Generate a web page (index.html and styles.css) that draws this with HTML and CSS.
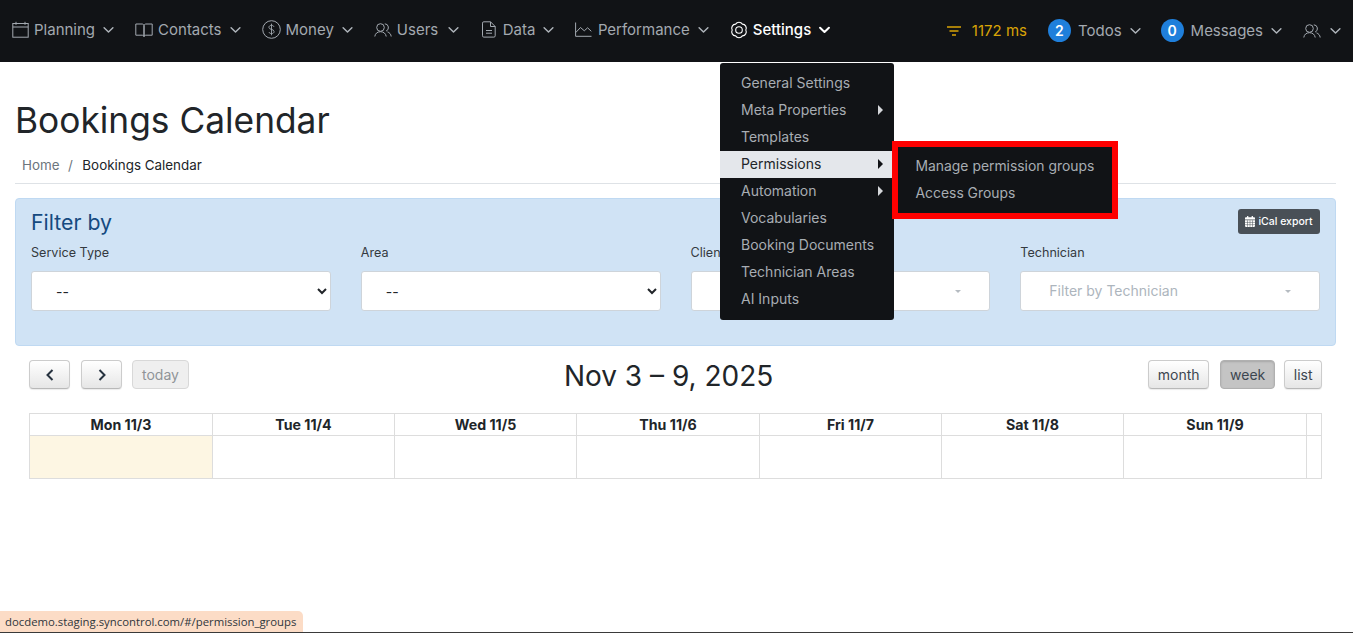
FILE: index.html
```html
<!DOCTYPE html>
<html lang="en">
<head>
<meta charset="utf-8">
<title>Bookings Calendar</title>
<link rel="stylesheet" href="styles.css">
</head>
<body>
<svg class="defs" width="0" height="0" aria-hidden="true">
  <symbol id="chev" viewBox="0 0 12 8"><path d="M1.2 1.5 6 6.2l4.8-4.7" fill="none" stroke="currentColor" stroke-linecap="round" stroke-linejoin="round"/></symbol>
  <symbol id="users" viewBox="0 0 18 16"><g fill="none" stroke="currentColor" stroke-width="1"><circle cx="6.5" cy="5.5" r="3.8"/><path d="M.8 14.5c.3-3 2.700-4.800 5.700-4.800s5.400 1.800 5.700 4.800"/><path d="M10.800 1.800a3.800 3.800 0 0 1 1.300 7.300M13.500 9.900c2 .6 3.500 2.300 3.700 4.600"/></g></symbol>
</svg>
<header class="navbar">
  <nav class="nav-left">
    <a class="nav-item"><svg class="ico ico-cal" viewBox="0 0 17 17"><g fill="none" stroke="currentColor" stroke-width="1"><rect x=".8" y="2.500" width="15.400" height="13.700"/><path d="M.8 6h15.400M4 .8v3M13 .8v3"/></g></svg><span>Planning</span><svg class="chev"><use href="#chev"/></svg></a>
    <a class="nav-item"><svg class="ico ico-book" viewBox="0 0 18 16"><g fill="none" stroke="currentColor" stroke-width="1"><path d="M.8 2h6.200c1 0 2 .6 2 1.600V14.500c0-.8-1-1.300-2-1.300H.8zM17.200 2H11c-1 0-2 .6-2 1.600V14.500c0-.8 1-1.300 2-1.300h6.200z"/></g></svg><span>Contacts</span><svg class="chev"><use href="#chev"/></svg></a>
    <a class="nav-item"><svg class="ico ico-money" viewBox="0 0 19 19"><circle cx="9.500" cy="9.500" r="8.800" fill="none" stroke="currentColor" stroke-width="1"/><path d="M12 6.800c-.4-1-1.400-1.500-2.500-1.500-1.400 0-2.600.8-2.600 2 0 2.800 5.200 1.400 5.200 4.300 0 1.200-1.200 2-2.600 2-1.200 0-2.200-.6-2.600-1.600M9.500 3.700v11.600" fill="none" stroke="currentColor" stroke-width=".9"/></svg><span>Money</span><svg class="chev"><use href="#chev"/></svg></a>
    <a class="nav-item nav-users"><svg class="ico ico-users"><use href="#users"/></svg><span>Users</span><svg class="chev"><use href="#chev"/></svg></a>
    <a class="nav-item"><svg class="ico ico-doc" viewBox="0 0 14 17"><g fill="none" stroke="currentColor" stroke-width="1"><path d="M1.800.8h6.700l4.700 4.700v9.300a1.300 1.300 0 0 1-1.300 1.300H1.800a1.300 1.300 0 0 1-1.300-1.300V2.100A1.300 1.300 0 0 1 1.800.8zM8.500.8v4.700h4.700M4 9.500h6M4 12.200h6"/></g></svg><span>Data</span><svg class="chev"><use href="#chev"/></svg></a>
    <a class="nav-item"><svg class="ico ico-chart" viewBox="0 0 17 15"><path d="M.6.500v13.800h15.900M.8 10.500l4.700-5 3.800 3.300 3.300-3 3.700 3.500" fill="none" stroke="currentColor" stroke-width="1"/></svg><span>Performance</span><svg class="chev"><use href="#chev"/></svg></a>
    <a class="nav-item active"><svg class="ico ico-gear" viewBox="0 0 18 18"><g fill="none" stroke="currentColor" stroke-width="1.100"><circle cx="9" cy="9" r="3.300"/><path d="M5.600 3.110A4 4 0 0 1 12.400 3.110 4 4 0 0 1 15.800 9 4 4 0 0 1 12.400 14.890 4 4 0 0 1 5.600 14.890 4 4 0 0 1 2.200 9 4 4 0 0 1 5.600 3.110z" stroke-linejoin="round"/></g></svg><span>Settings</span><svg class="chev"><use href="#chev"/></svg></a>
  </nav>
  <div class="nav-right">
    <a class="timing"><svg class="ico-filter" viewBox="0 0 14 10"><path d="M0 1h14M2.500 5h9M5 9h4" fill="none" stroke="currentColor" stroke-width="1.300"/></svg><span>1172 ms</span></a>
    <a class="nav-item"><b class="badge">2</b><span>Todos</span><svg class="chev"><use href="#chev"/></svg></a>
    <a class="nav-item"><b class="badge">0</b><span>Messages</span><svg class="chev"><use href="#chev"/></svg></a>
    <a class="nav-item nav-user"><svg class="ico ico-users"><use href="#users"/></svg><svg class="chev"><use href="#chev"/></svg></a>
  </div>
</header>

<div class="menu">
  <a>General Settings</a>
  <a class="has-sub">Meta Properties</a>
  <a>Templates</a>
  <a class="has-sub current">Permissions</a>
  <a class="has-sub">Automation</a>
  <a>Vocabularies</a>
  <a>Booking Documents</a>
  <a>Technician Areas</a>
  <a>AI Inputs</a>
</div>
<div class="submenu">
  <a>Manage permission groups</a>
  <a>Access Groups</a>
</div>

<main class="page">
  <h1 class="title">Bookings Calendar</h1>
  <ol class="crumbs"><li class="home">Home</li><li class="sep">/</li><li>Bookings Calendar</li></ol>
  <section class="filter">
    <div class="filter-head">
      <h2>Filter by</h2>
      <a class="ical"><svg viewBox="0 0 12 13"><path fill="currentColor" d="M0 5h12v7a1 1 0 0 1-1 1H1a1 1 0 0 1-1-1zM1 1.500h1.500V0H4v1.500h4V0h1.500v1.500H11a1 1 0 0 1 1 1V4H0V2.500a1 1 0 0 1 1-1z"/><path stroke="#495057" stroke-width=".6" d="M3 5v8M6 5v8M9 5v8M0 7.600h12M0 10.300h12"/></svg>iCal export</a>
    </div>
    <div class="filter-grid">
      <div class="field"><label>Service Type</label><select class="select"><option>--</option></select></div>
      <div class="field"><label>Area</label><select class="select"><option>--</option></select></div>
      <div class="field"><label>Client</label><div class="fake-select">Filter by Client<i></i></div></div>
      <div class="field"><label>Technician</label><div class="fake-select">Filter by Technician<i></i></div></div>
    </div>
  </section>

  <section class="calendar">
    <div class="toolbar">
      <div class="tb-group">
        <button class="btn arrow"><svg viewBox="0 0 10 14"><path d="M7.500 2 2.500 7l5 5" fill="none" stroke="currentColor" stroke-width="2"/></svg></button>
        <button class="btn arrow"><svg viewBox="0 0 10 14"><path d="M2.500 2l5 5-5 5" fill="none" stroke="currentColor" stroke-width="2"/></svg></button>
        <button class="btn disabled">today</button>
      </div>
      <h2 class="range">Nov 3 – 9, 2025</h2>
      <div class="tb-group views">
        <button class="btn btn-month">month</button>
        <button class="btn pressed">week</button>
        <button class="btn btn-list">list</button>
      </div>
    </div>
    <div class="grid">
      <div class="cell head">Mon 11/3</div><div class="cell head">Tue 11/4</div><div class="cell head">Wed 11/5</div><div class="cell head">Thu 11/6</div><div class="cell head">Fri 11/7</div><div class="cell head">Sat 11/8</div><div class="cell head">Sun 11/9</div><div class="cell head"></div>
      <div class="cell day today"></div><div class="cell day"></div><div class="cell day"></div><div class="cell day"></div><div class="cell day"></div><div class="cell day"></div><div class="cell day"></div><div class="cell day"></div>
    </div>
  </section>
</main>
<div class="status">docdemo.staging.syncontrol.com/#/permission_groups</div>
</body>
</html>
```
FILE: styles.css
```css
* { box-sizing: border-box; }
html, body { margin: 0; height: 633px; overflow: hidden; }
body { font-family: Inter, "Liberation Sans", sans-serif; font-size: 14px; color: #212529; background: #fff; position: relative; border-bottom: 1px solid #3a3a3a; }
.defs { position: absolute; }

.navbar { height: 62px; background: #111316; display: flex; justify-content: space-between; align-items: center; padding: 0 12px 3px; color: #a3a9b0; font-size: 15px; }
.nav-left, .nav-right { display: flex; align-items: center; }
.nav-left { gap: 21px; }
.nav-item { display: flex; align-items: center; color: #a3a9b0; }
.nav-item span { margin-left: 5px; }
.nav-item .chev { width: 11px; height: 8px; margin-left: 8px; color: #aeb4ba; stroke-width: 1.6; }
.nav-item.active, .nav-item.active .chev { color: #fff; }
.nav-item.active span { font-weight: 500; }
.nav-item.active .chev { stroke-width: 2.2; }
.nav-users .chev { margin-left: 10px; }
.nav-users { margin-right: 2px; }
.nav-user { margin-left: 1px; }
.nav-user .ico + .chev { margin-left: 9px; }
.ico { color: #a3a9b0; flex: none; }
.active .ico { color: #fff; }
.ico-cal { width: 17px; height: 17px; }
.ico-book { width: 18px; height: 16px; }
.ico-money { width: 19px; height: 19px; }
.ico-users { width: 18px; height: 16px; }
.ico-doc { width: 14px; height: 17px; }
.ico-doc + span { margin-left: 6.500px; }
.ico-chart { width: 17px; height: 15px; }
.ico-chart + span { margin-left: 5.500px; }
.ico-gear { width: 18px; height: 18px; }

.nav-right { gap: 20px; padding-top: 2px; }
.timing { display: flex; align-items: center; gap: 11px; color: #d9a406; margin-right: 1px; }
.ico-filter { width: 14px; height: 10px; }
.badge { width: 23px; height: 23px; border-radius: 50%; background: #1f7fdb; color: #fff; font-size: 14px; font-weight: 600; display: flex; align-items: center; justify-content: center; }
.nav-item .badge + span { margin-left: 7px; }

.menu { position: absolute; left: 720px; top: 63px; width: 174px; height: 257px; background: #111316; border-radius: 3px; padding-top: 7px; z-index: 5; }
.menu a { display: block; height: 27px; line-height: 25px; padding-left: 21px; color: #a8adb3; font-size: 14px; position: relative; }
.menu a.current { background: #e4e7eb; color: #212529; }
.menu a.has-sub::after { content: ""; position: absolute; right: 11px; top: 8px; border-left: 5px solid #d6d8db; border-top: 5px solid transparent; border-bottom: 5px solid transparent; }
.menu a.current::after { border-left-color: #111316; }
.submenu { position: absolute; left: 892px; top: 141px; width: 226px; height: 78px; background: #111316; border: 6px solid #fe0000; padding: 6px 0 0 17.500px; z-index: 6; }
.submenu a { display: block; height: 27px; line-height: 27px; color: #a8adb3; font-size: 13.900px; }

.page { padding: 0 17px 0 15px; }
.title { margin: 0; padding-top: 38px; font-size: 35.300px; font-weight: 400; line-height: 42px; color: #212529; }
.crumbs { list-style: none; margin: 13px 0 0; padding: 0 0 7px 7px; display: flex; font-size: 13.400px; line-height: 21px; border-bottom: 1px solid #dee2e6; height: 29px; }
.crumbs .home { color: #6c757d; }
.crumbs .sep { color: #6c757d; margin: 0 9.500px 0 8.500px; }

.filter { margin-top: 14px; height: 148px; background: #d0e3f5; border: 1px solid #bfd9f2; border-radius: 4px; padding: 10px 15px 0; }
.filter-head { display: flex; justify-content: space-between; align-items: flex-start; }
.filter-head h2 { margin: 0; font-size: 21.300px; line-height: 26px; font-weight: 400; color: #154a80; }
.ical { background: #495057; color: #fff; font-size: 10.500px; font-weight: 500; height: 25px; width: 82px; border-radius: 3px; display: flex; align-items: center; justify-content: center; gap: 3px; }
.ical svg { width: 10px; height: 11px; }
.filter-grid { display: grid; grid-template-columns: repeat(4, 1fr); column-gap: 30px; margin-top: 10px; }
.field label { display: block; font-size: 12.600px; line-height: 16px; color: #343a40; margin-bottom: 10px; }
.select, .fake-select { width: 100%; height: 40px; background: #fff; border: 1px solid #ced4da; border-radius: 3px; font-family: inherit; font-size: 14px; }
.select { padding: 0 20px; color: #212529; }
.fake-select { padding: 0 28px; line-height: 38px; color: #adb5bd; position: relative; }
.fake-select i { position: absolute; right: 28px; top: 18px; border-top: 3px solid #b5bbc1; border-left: 3.500px solid transparent; border-right: 3.500px solid transparent; }

.calendar { padding: 0 14px; }
.toolbar { display: flex; justify-content: space-between; align-items: flex-start; margin-top: 14px; height: 30px; }
.tb-group { display: flex; gap: 10px; }
.views { gap: 9px; }
.btn { height: 29px; padding: 0 9px; font: 14px Inter, "Liberation Sans", sans-serif; color: #3c4650; background: linear-gradient(#fff, #e6e6e6); border: 1px solid #ccc; border-bottom-color: #b8b8b8; border-radius: 4px; box-shadow: 0 1px 1px rgba(0,0,0,.08); }
.btn-month { padding: 0 8.500px; margin-right: 2px; }
.btn-list { padding: 0 8.500px; }
.btn.arrow { width: 41px; color: #26323f; display: flex; align-items: center; justify-content: center; margin-right: 1px; }
.btn.arrow + .btn.arrow { margin-right: 0; }
.btn.arrow svg { width: 10px; height: 14px; }
.btn.disabled { background: #efefef; color: #8f9498; box-shadow: none; border-color: #d8d8d8; width: 57px; padding: 0; }
.btn.pressed { background: #c4c4c4; border-color: #b0b0b0; box-shadow: inset 0 1px 2px rgba(0,0,0,.15); }
.range { margin: 0; font-size: 28px; font-weight: 400; line-height: 32px; color: #212529; }

.grid { display: grid; grid-template-columns: 183px 182px 182px 183px 182px 182px 183px 1fr; margin-top: 23px; border-top: 1px solid #ddd; border-left: 1px solid #ddd; }
.cell { border-right: 1px solid #ddd; border-bottom: 1px solid #ddd; }
.head { height: 22px; text-align: center; font-weight: 700; font-size: 14.200px; line-height: 22px; color: #212529; }
.day { height: 43px; }
.today { background: #fdf6e3; }

.status { position: absolute; left: 0; bottom: 0; height: 21px; padding: 0 7px 0 5px; line-height: 21px; font-family: "Open Sans", "Noto Sans", sans-serif; font-size: 11.350px; color: #30363c; background: #fcdcc6; border-top-right-radius: 5px; z-index: 7; }
```
